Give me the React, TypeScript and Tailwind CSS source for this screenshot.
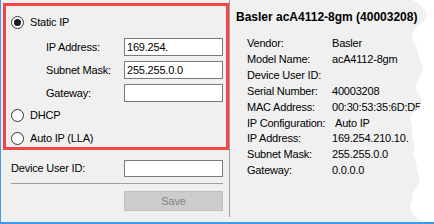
const deviceInfo: [string, string][] = [
  ['Vendor:', 'Basler'],
  ['Model Name:', 'acA4112-8gm'],
  ['Device User ID:', ''],
  ['Serial Number:', '40003208'],
  ['MAC Address:', '00:30:53:35:6D:D5'],
  ['IP Configuration:', 'Auto IP'],
  ['IP Address:', '169.254.210.10.'],
  ['Subnet Mask:', '255.255.0.0'],
  ['Gateway:', '0.0.0.0'],
];

function Radio({ label, checked }: { label: string; checked?: boolean }) {
  return (
    <div className="flex h-[14px] items-center gap-[6px]">
      <span className="flex h-[13px] w-[13px] items-center justify-center rounded-full border border-[#333333] bg-white">
        {checked && <span className="h-[7px] w-[7px] rounded-full bg-[#1a1a1a]" />}
      </span>
      <span>{label}</span>
    </div>
  );
}

function Field({ label, value }: { label: string; value: string }) {
  return (
    <div className="flex items-center">
      <span className="w-[78px]">{label}</span>
      <div className="flex h-[18px] w-[99px] items-center border border-[#7a7a7a] bg-white pl-[2px]">
        {value}
      </div>
    </div>
  );
}

// torn paper edge on the right side of the screenshot
const tornEdge =
  '3,0 10,5 17,13 15,20 7,27 3,33 2,40 7,47 8,53 10,60 13,67 12,73 8,80 5,87 8,93 12,100 10,107 3,112 0,118 2,125 2,133 3,140 5,147 3,153 5,160 7,167 8,173 10,180 7,187 3,193 2,200 0,207 2,213 10,220 12,224 24,224 24,0';

export default function App() {
  return (
    <div className="relative flex h-[224px] w-[434px] overflow-hidden border-b-2 border-l border-[#3d9be9] bg-[#f0f0f0] font-['Liberation_Sans',Arial,sans-serif] text-[11px] tracking-[-0.2px] text-black">
      {/* Left: IP configuration */}
      <div className="h-[217px] w-[229px] shrink-0 border-r border-[#a0a0a0]">
        <div className="ml-[2px] mt-[3px] h-[147px] w-[226px] border-[3px] border-[#f54444] pl-[5px] pt-[9px]">
          <Radio label="Static IP" checked />
          <div className="mt-[9px] flex flex-col gap-[5px] pl-[35px]">
            <Field label="IP Address:" value="169.254." />
            <Field label="Subnet Mask:" value="255.255.0.0" />
            <Field label="Gateway:" value="" />
          </div>
          <div className="mt-[6px] flex flex-col gap-[9px]">
            <Radio label="DHCP" />
            <Radio label="Auto IP (LLA)" />
          </div>
        </div>
        <div className="mt-[10px] flex items-center pl-[10px]">
          <span className="w-[113px]">Device User ID:</span>
          <div className="h-[17px] w-[99px] border border-[#7a7a7a] bg-white" />
        </div>
        <div className="ml-[10px] mt-[6px] h-px w-[212px] bg-[#a0a0a0]" />
        <button className="ml-[123px] mt-[7px] flex h-[20px] w-[99px] items-center justify-center border border-[#bfbfbf] bg-[#cccccc] text-[#838383]">
          Save
        </button>
      </div>

      {/* Right: device info */}
      <div className="pl-[6px] pt-[9px]">
        <div className="text-[12px] font-bold leading-[16px] tracking-normal">Basler acA4112-8gm (40003208)</div>
        <div className="mt-[11px] pl-[11px]">
          {deviceInfo.map(([k, v]) => (
            <div key={k} className="flex whitespace-nowrap leading-[15.9px]">
              <span className="min-w-[85px]">{k}</span>
              <span className={k === 'IP Configuration:' ? 'pl-[3px]' : ''}>{v}</span>
            </div>
          ))}
        </div>
      </div>

      <svg className="absolute right-0 top-0 h-[224px] w-[24px]" viewBox="0 0 24 224">
        <polygon points={tornEdge} fill="#ffffff" />
      </svg>
    </div>
  );
}
